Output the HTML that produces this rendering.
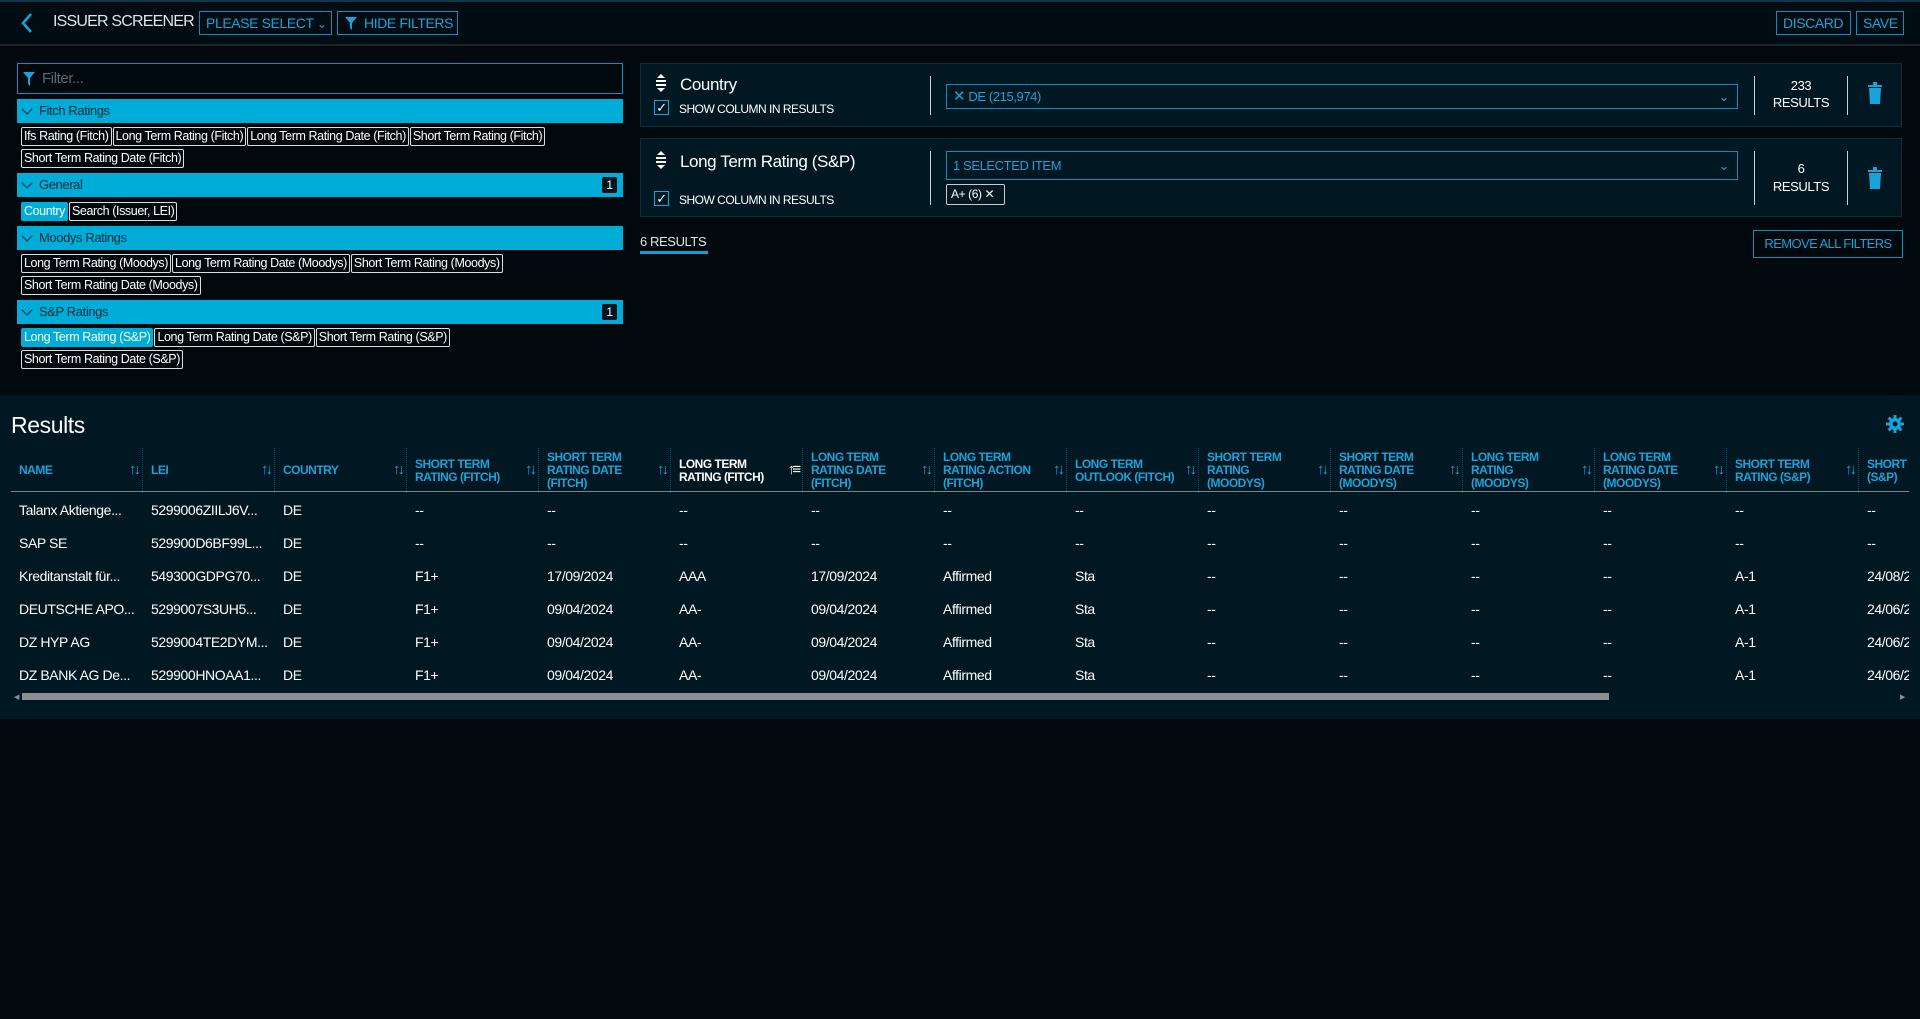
<!DOCTYPE html>
<html><head><meta charset="utf-8"><style>
*{box-sizing:border-box;margin:0;padding:0}
body{width:1920px;height:1019px;background:#02090d;font-family:"Liberation Sans",sans-serif;color:#fff;position:relative;overflow:hidden;letter-spacing:-0.4px}
.a{position:absolute}
.top{left:0;top:0;width:1920px;height:46px;background:#010d13;border-top:2px solid #0a3a50;border-bottom:2px solid #1c2328}
.btn{position:absolute;top:11px;height:24px;border:1px solid #0c8fc0;color:#1aa3da;font-size:14px;line-height:22px;padding:0 6px;white-space:nowrap}
.bar{position:absolute;left:17px;width:606px;height:24px;background:#00acd8;color:#0a2b3a;font-size:13px;line-height:24px;padding-left:22px}
.bar:before{content:"";position:absolute;left:6px;top:6px;width:7px;height:7px;border-right:1.5px solid #0a2b3a;border-bottom:1.5px solid #0a2b3a;transform:rotate(45deg)}
.badge{position:absolute;right:6px;top:4px;width:15px;height:16px;background:#02141d;color:#fff;font-size:12px;line-height:16px;text-align:center;border-radius:2px}
.tags{position:absolute;left:21px;width:600px;font-size:12.5px;letter-spacing:-0.4px}
.tag{display:inline-block;border:1px solid #ddd;border-radius:2px;padding:0 2px;height:19px;line-height:17px;margin:0 1px 3px 0;white-space:nowrap;color:#fff}
.tag.on{background:#00acd8;border-color:#00acd8}
.card{position:absolute;left:640px;width:1262px;background:#011823;border:1px solid #0d2c3a}
.sel{position:absolute;left:305px;width:792px;border:1px solid #0f8cc0;color:#1aa3da;font-size:13px;padding-left:6px}
.vd{position:absolute;width:1px;background:#c8d0d4}
.cb{position:absolute;width:15px;height:15px;border:1px solid #1aa3da;background:#021a26;color:#fff;font-size:13px;line-height:13px;text-align:center}
.sc{font-size:12px;color:#fff;letter-spacing:-0.5px}
.res{left:0;top:395px;width:1920px;height:324px;background:#011722}
.th{position:absolute;top:448px;height:45px;width:132px;color:#1aa3da;font-size:12px;font-weight:bold;line-height:13px;display:flex;align-items:center;padding:0 22px 0 8px;border-right:1px dotted #0d4a66;letter-spacing:-0.5px}
.th span{position:absolute;right:4px;top:15px;font-size:15px;font-weight:normal;letter-spacing:-3px}
.col{position:absolute;top:0px;line-height:33px}
</style></head><body>
<div class="a top"></div>
<svg class="a" style="left:20px;top:12px" width="14" height="22"><path d="M11 2 L3 11 L11 20" stroke="#1aa3da" stroke-width="2.5" fill="none"/></svg>
<div class="a" style="left:53px;top:13px;font-size:16px;color:#dfe4e7;letter-spacing:-0.8px">ISSUER SCREENER</div>
<div class="btn" style="left:199px;width:133px">PLEASE SELECT <span style="font-size:12px">&#8964;</span></div>
<div class="btn" style="left:337px;width:121px;padding-left:26px"><svg class="a" style="left:7px;top:5px" width="12" height="13"><path d="M0 0H12L7 6V13L5 11V6Z" fill="#1aa3da"/></svg>HIDE FILTERS</div>
<div class="btn" style="left:1776px;width:75px">DISCARD</div>
<div class="btn" style="left:1856px;width:48px">SAVE</div>

<div class="a" style="left:17px;top:63px;width:606px;height:31px;border:1px solid #0f8cc0;color:#5b6a72;font-size:15px;line-height:29px;padding-left:24px">Filter...</div>
<svg class="a" style="left:23px;top:72px" width="12" height="14"><path d="M0 0H12L7 6V14L5 12V6Z" fill="#1aa3da"/></svg>

<div class="bar" style="top:99px">Fitch Ratings</div>
<div class="tags" style="top:127px"><span class="tag">Ifs Rating (Fitch)</span><span class="tag">Long Term Rating (Fitch)</span><span class="tag">Long Term Rating Date (Fitch)</span><span class="tag">Short Term Rating (Fitch)</span><br><span class="tag">Short Term Rating Date (Fitch)</span></div>
<div class="bar" style="top:173px">General<div class="badge">1</div></div>
<div class="tags" style="top:202px"><span class="tag on">Country</span><span class="tag">Search (Issuer, LEI)</span></div>
<div class="bar" style="top:226px">Moodys Ratings</div>
<div class="tags" style="top:254px"><span class="tag">Long Term Rating (Moodys)</span><span class="tag">Long Term Rating Date (Moodys)</span><span class="tag">Short Term Rating (Moodys)</span><br><span class="tag">Short Term Rating Date (Moodys)</span></div>
<div class="bar" style="top:300px">S&amp;P Ratings<div class="badge">1</div></div>
<div class="tags" style="top:328px"><span class="tag on">Long Term Rating (S&amp;P)</span><span class="tag">Long Term Rating Date (S&amp;P)</span><span class="tag">Short Term Rating (S&amp;P)</span><br><span class="tag">Short Term Rating Date (S&amp;P)</span></div>

<div class="card" style="top:63px;height:64px">
 <svg class="a" style="left:13px;top:10px" width="14" height="18"><path d="M7 0L11 4H3Z M2 6H12V8H2Z M2 10H12V12H2Z M7 18L11 14H3Z" fill="#fff"/></svg>
 <div class="a" style="left:39px;top:11px;font-size:17px">Country</div>
 <div class="cb" style="left:13px;top:36px">&#10003;</div>
 <div class="a sc" style="left:38px;top:38px">SHOW COLUMN IN RESULTS</div>
 <div class="vd" style="left:289px;top:12px;height:39px"></div>
 <div class="sel" style="top:20px;height:25px;line-height:23px"><span style="font-size:15px">&#10005;</span> DE (215,974)<span class="a" style="right:8px;top:0">&#8964;</span></div>
 <div class="vd" style="left:1113px;top:12px;height:39px"></div>
 <div class="a" style="left:1120px;top:13px;width:80px;text-align:center;font-size:13px;line-height:17px">233<br>RESULTS</div>
 <div class="vd" style="left:1206px;top:12px;height:39px"></div>
 <svg class="a" style="left:1226px;top:18px" width="16" height="22"><path d="M1 3H15V5H1Z M6 0H10V3H6Z M2 6H14L13 22H3Z" fill="#1aa3da"/></svg>
</div>
<div class="card" style="top:138px;height:79px">
 <svg class="a" style="left:13px;top:12px" width="14" height="18"><path d="M7 0L11 4H3Z M2 6H12V8H2Z M2 10H12V12H2Z M7 18L11 14H3Z" fill="#fff"/></svg>
 <div class="a" style="left:39px;top:13px;font-size:17px">Long Term Rating (S&amp;P)</div>
 <div class="cb" style="left:13px;top:52px">&#10003;</div>
 <div class="a sc" style="left:38px;top:54px">SHOW COLUMN IN RESULTS</div>
 <div class="vd" style="left:289px;top:12px;height:54px"></div>
 <div class="sel" style="top:12px;height:29px;line-height:27px">1 SELECTED ITEM<span class="a" style="right:8px;top:0">&#8964;</span></div>
 <div class="a" style="left:305px;top:45px;width:59px;height:21px;border:1px solid #ccc;border-radius:2px;font-size:12px;line-height:19px;padding-left:4px">A+ (6) &#10005;</div>
 <div class="vd" style="left:1113px;top:12px;height:54px"></div>
 <div class="a" style="left:1120px;top:21px;width:80px;text-align:center;font-size:13px;line-height:18px">6<br>RESULTS</div>
 <div class="vd" style="left:1206px;top:12px;height:54px"></div>
 <svg class="a" style="left:1226px;top:28px" width="16" height="22"><path d="M1 3H15V5H1Z M6 0H10V3H6Z M2 6H14L13 22H3Z" fill="#1aa3da"/></svg>
</div>
<div class="a" style="left:640px;top:234px;font-size:13px;color:#dfe4e7">6 RESULTS</div>
<div class="a" style="left:640px;top:251px;width:68px;height:3px;background:#0fa0d8"></div>
<div class="a" style="left:1753px;top:230px;width:150px;height:28px;border:1px solid #0f8cc0;color:#1aa3da;font-size:13px;line-height:26px;text-align:center;white-space:nowrap;letter-spacing:-0.6px">REMOVE ALL FILTERS</div>

<div class="a res"></div>
<div class="a" style="left:11px;top:412px;font-size:23px;color:#fff">Results</div>
<svg class="a" style="left:1886px;top:415px" width="18" height="18" viewBox="0 0 18 18"><g fill="#1aa3da"><circle cx="9" cy="9" r="6"/><rect x="7.5" y="0" width="3" height="18"/><rect x="0" y="7.5" width="18" height="3"/><rect x="7.5" y="0" width="3" height="18" transform="rotate(45 9 9)"/><rect x="7.5" y="0" width="3" height="18" transform="rotate(-45 9 9)"/></g><circle cx="9" cy="9" r="2.5" fill="#011722"/></svg>

<div class="a" style="left:0;top:447px;width:1909px;height:60px;overflow:hidden">
<div style="position:relative;top:-447px">
<div class="th" style="left:11px">NAME<span>↑↓</span></div>
<div class="th" style="left:143px">LEI<span>↑↓</span></div>
<div class="th" style="left:275px">COUNTRY<span>↑↓</span></div>
<div class="th" style="left:407px">SHORT TERM RATING (FITCH)<span>↑↓</span></div>
<div class="th" style="left:539px">SHORT TERM RATING DATE (FITCH)<span>↑↓</span></div>
<div class="th" style="left:671px;color:#fff">LONG TERM RATING (FITCH)<span style="color:#fff">↑≡</span></div>
<div class="th" style="left:803px">LONG TERM RATING DATE (FITCH)<span>↑↓</span></div>
<div class="th" style="left:935px">LONG TERM RATING ACTION (FITCH)<span>↑↓</span></div>
<div class="th" style="left:1067px">LONG TERM OUTLOOK (FITCH)<span>↑↓</span></div>
<div class="th" style="left:1199px">SHORT TERM RATING (MOODYS)<span>↑↓</span></div>
<div class="th" style="left:1331px">SHORT TERM RATING DATE (MOODYS)<span>↑↓</span></div>
<div class="th" style="left:1463px">LONG TERM RATING (MOODYS)<span>↑↓</span></div>
<div class="th" style="left:1595px">LONG TERM RATING DATE (MOODYS)<span>↑↓</span></div>
<div class="th" style="left:1727px">SHORT TERM RATING (S&amp;P)<span>↑↓</span></div>
<div class="th" style="left:1859px">SHORT RATING (S&amp;P)</div>
</div></div>
<div class="a" style="left:11px;top:491px;width:1898px;height:1px;background:#7a8589"></div>

<div class="a" style="left:0;top:494px;width:1909px;height:196px;overflow:hidden;font-size:14px;white-space:nowrap">
<div class="col" style="left:19px">Talanx Aktienge...<br>SAP SE<br>Kreditanstalt für...<br>DEUTSCHE APO...<br>DZ HYP AG<br>DZ BANK AG De...</div>
<div class="col" style="left:151px">5299006ZIILJ6V...<br>529900D6BF99L...<br>549300GDPG70...<br>5299007S3UH5...<br>5299004TE2DYM...<br>529900HNOAA1...</div>
<div class="col" style="left:283px">DE<br>DE<br>DE<br>DE<br>DE<br>DE</div>
<div class="col" style="left:415px">--<br>--<br>F1+<br>F1+<br>F1+<br>F1+</div>
<div class="col" style="left:547px">--<br>--<br>17/09/2024<br>09/04/2024<br>09/04/2024<br>09/04/2024</div>
<div class="col" style="left:679px">--<br>--<br>AAA<br>AA-<br>AA-<br>AA-</div>
<div class="col" style="left:811px">--<br>--<br>17/09/2024<br>09/04/2024<br>09/04/2024<br>09/04/2024</div>
<div class="col" style="left:943px">--<br>--<br>Affirmed<br>Affirmed<br>Affirmed<br>Affirmed</div>
<div class="col" style="left:1075px">--<br>--<br>Sta<br>Sta<br>Sta<br>Sta</div>
<div class="col" style="left:1207px">--<br>--<br>--<br>--<br>--<br>--</div>
<div class="col" style="left:1339px">--<br>--<br>--<br>--<br>--<br>--</div>
<div class="col" style="left:1471px">--<br>--<br>--<br>--<br>--<br>--</div>
<div class="col" style="left:1603px">--<br>--<br>--<br>--<br>--<br>--</div>
<div class="col" style="left:1735px">--<br>--<br>A-1<br>A-1<br>A-1<br>A-1</div>
<div class="col" style="left:1867px">--<br>--<br>24/08/2024<br>24/06/2024<br>24/06/2024<br>24/06/2024</div>
</div>
<div class="a" style="left:22px;top:693px;width:1587px;height:7px;background:#8a8f91"></div>
<div class="a" style="left:14px;top:693px;font-size:7px;color:#8a8f91">◀</div>
<div class="a" style="left:1900px;top:693px;font-size:7px;color:#8a8f91">▶</div>
</body></html>
